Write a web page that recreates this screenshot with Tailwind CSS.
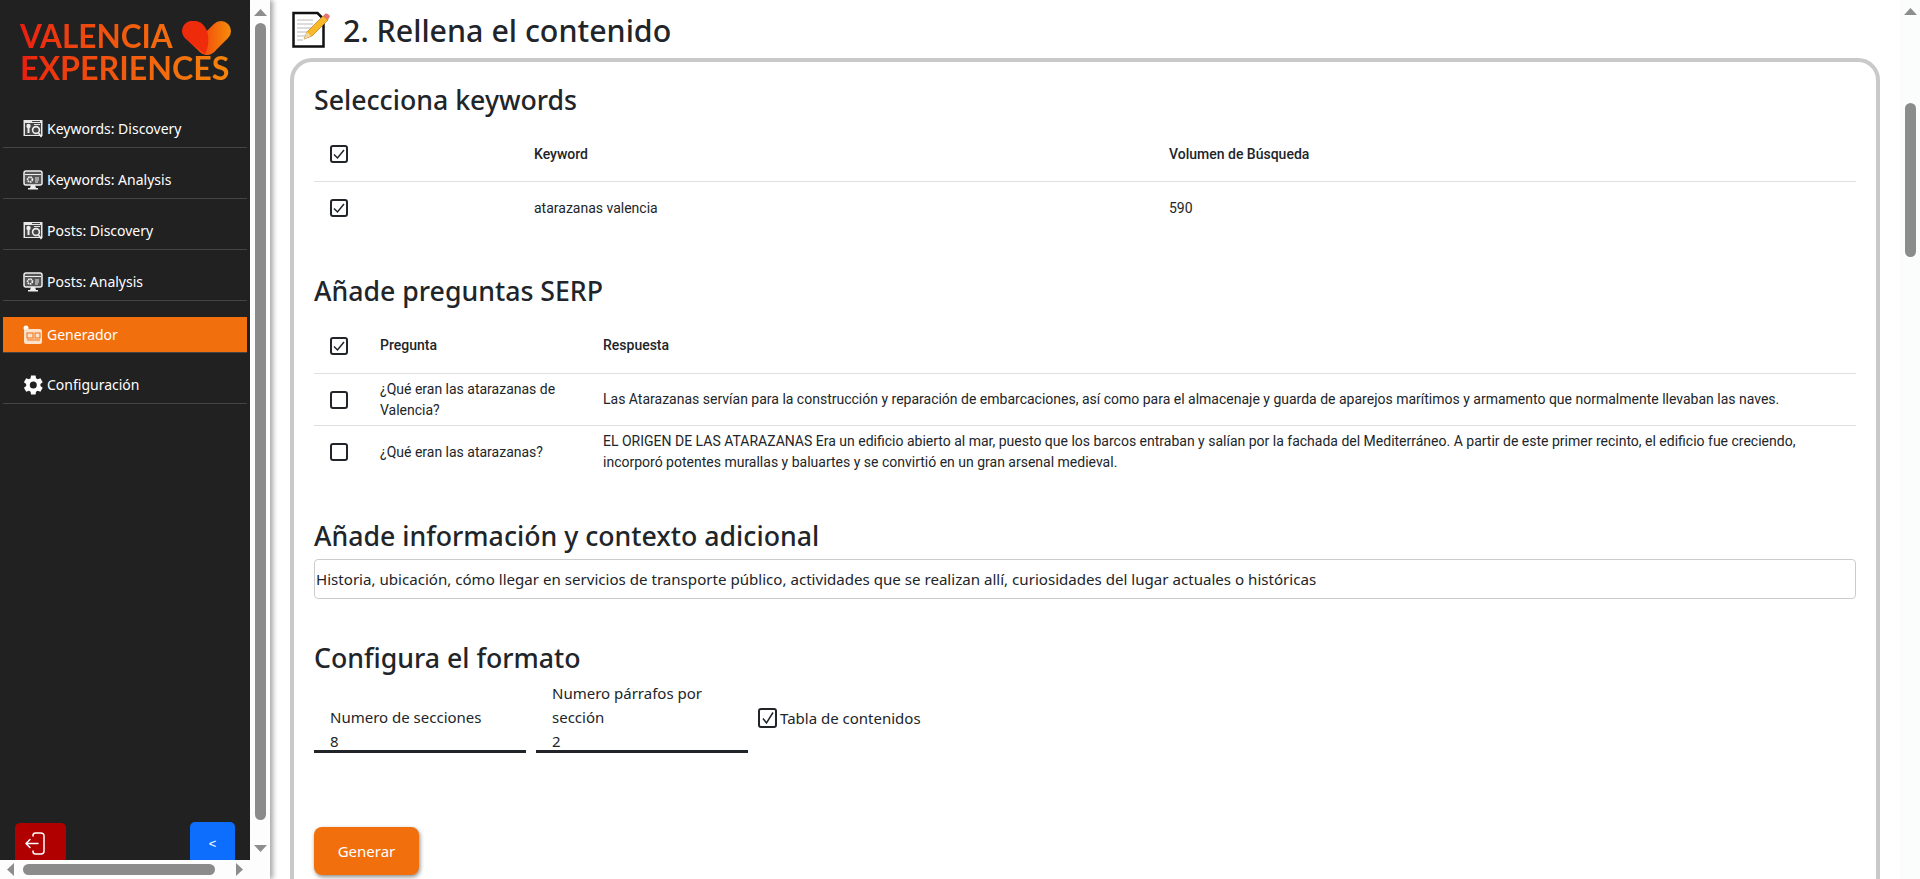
<!DOCTYPE html>
<html>
<head>
    <title>Generador</title>
    <script src="https://cdn.jsdelivr.net/npm/@tailwindcss/browser@4"></script>
</head>
<body class="bg-white text-[#212529] font-['Noto_Sans',sans-serif] overflow-hidden">
    <div class="flex h-[879px] w-[1920px] overflow-hidden">

        <!-- Sidebar -->
        <div class="w-[270px] h-full shrink-0 flex flex-col shadow-[3px_0_5px_rgba(0,0,0,0.35)] z-10 bg-white">
            <div class="flex flex-1 min-h-0">
                <div class="w-[250px] bg-[#212121] flex flex-col overflow-hidden">
                    <!-- Logo -->
                    <div class="pl-[20px] pt-[20px] h-[110px] relative font-['Lato',sans-serif] font-bold leading-[32px] text-transparent">
                        <div class="text-[31.500px] w-[212px] bg-clip-text bg-linear-to-r from-[#ea1c10] to-[#f5850a]">VALENCIA</div>
                        <div class="text-[32.200px] w-[212px] bg-clip-text bg-linear-to-r from-[#ea1c10] to-[#f5850a]">EXPERIENCES</div>
                        <svg class="absolute left-[181px] top-[19px]" width="50" height="37" viewBox="0 0 50 37" fill="none">
                            <defs>
                                <linearGradient id="heart" gradientUnits="userSpaceOnUse" x1="0" y1="0" x2="50" y2="0"><stop offset="0" stop-color="#ee1c0e"/><stop offset="1" stop-color="#f68c0a"/></linearGradient>
                            </defs>
                            <path d="M26 26L40 12" stroke="url(#heart)" stroke-width="20" stroke-linecap="round"/>
                            <path d="M11 12L26 26" stroke="url(#heart)" stroke-width="20" stroke-linecap="round"/>
                            <path d="M13 2C22 2 26 10 27 16c1 7 0 13-3 19l-2-1.500L4 19C-1 13 1 2 13 2z" fill="#ee2c0c"/>
                        </svg>
                    </div>

                    <!-- Nav -->
                    <nav class="text-[14px] text-white">
                        <a class="mx-[3px] h-[38px] mb-[13px] flex items-center gap-[4px] pl-[20px] border-b border-[#444]">
                            <svg width="20" height="20" viewBox="0 0 20 20" fill="none"><rect x="0.500" y="1" width="19" height="16" fill="#e8e8e8"/><rect x="2" y="4" width="16" height="12" fill="#444"/><rect x="9" y="2" width="8" height="1" fill="#444"/><circle cx="5.500" cy="7" r="2.200" fill="#eee"/><rect x="4.500" y="8" width="2" height="6" fill="#eee"/><circle cx="13" cy="11" r="3.400" stroke="#eee" stroke-width="1.600"/><path d="M15.500 14l3 4" stroke="#eee" stroke-width="1.600"/><rect x="11" y="5" width="6" height="1" fill="#ddd"/></svg>
                            <span>Keywords: Discovery</span>
                        </a>
                        <a class="mx-[3px] h-[38px] mb-[13px] flex items-center gap-[4px] pl-[20px] border-b border-[#444]">
                            <svg width="20" height="20" viewBox="0 0 20 20" fill="none"><rect x="1" y="1" width="18" height="14" rx="2" fill="#555" stroke="#eee" stroke-width="1.500"/><rect x="2" y="4" width="16" height="1" fill="#eee"/><circle cx="7" cy="9.500" r="2.400" stroke="#eee" stroke-width="1.800" stroke-dasharray="1.500 0.600"/><path d="M12 8h4M12 10h4M12 12h3" stroke="#eee"/><path d="M8 15h4l1 3H7z" fill="#eee"/><rect x="5" y="18" width="10" height="1.500" fill="#eee"/></svg>
                            <span>Keywords: Analysis</span>
                        </a>
                        <a class="mx-[3px] h-[38px] mb-[13px] flex items-center gap-[4px] pl-[20px] border-b border-[#444]">
                            <svg width="20" height="20" viewBox="0 0 20 20" fill="none"><rect x="0.500" y="1" width="19" height="16" fill="#e8e8e8"/><rect x="2" y="4" width="16" height="12" fill="#444"/><rect x="9" y="2" width="8" height="1" fill="#444"/><circle cx="5.500" cy="7" r="2.200" fill="#eee"/><rect x="4.500" y="8" width="2" height="6" fill="#eee"/><circle cx="13" cy="11" r="3.400" stroke="#eee" stroke-width="1.600"/><path d="M15.500 14l3 4" stroke="#eee" stroke-width="1.600"/><rect x="11" y="5" width="6" height="1" fill="#ddd"/></svg>
                            <span>Posts: Discovery</span>
                        </a>
                        <a class="mx-[3px] h-[38px] mb-[16px] flex items-center gap-[4px] pl-[20px] border-b border-[#444]">
                            <svg width="20" height="20" viewBox="0 0 20 20" fill="none"><rect x="1" y="1" width="18" height="14" rx="2" fill="#555" stroke="#eee" stroke-width="1.500"/><rect x="2" y="4" width="16" height="1" fill="#eee"/><circle cx="7" cy="9.500" r="2.400" stroke="#eee" stroke-width="1.800" stroke-dasharray="1.500 0.600"/><path d="M12 8h4M12 10h4M12 12h3" stroke="#eee"/><path d="M8 15h4l1 3H7z" fill="#eee"/><rect x="5" y="18" width="10" height="1.500" fill="#eee"/></svg>
                            <span>Posts: Analysis</span>
                        </a>
                        <a class="mx-[3px] h-[36px] mb-[13px] flex items-center gap-[4px] pl-[20px] bg-[#f16f0c] border-b border-[#444]">
                            <svg width="20" height="20" viewBox="0 0 20 20" fill="none"><circle cx="3" cy="3" r="2.500" fill="#fff"/><path d="M1 6c0-1 1-2 2-2h14c1 0 2 1 2 2v11c0 1-1 2-2 2H3c-1 0-2-1-2-2z" fill="#fde2cc"/><rect x="4" y="8" width="6" height="5" stroke="#f16f0c"/><rect x="12" y="8" width="5" height="5" stroke="#f16f0c"/><path d="M4 15h13" stroke="#f16f0c"/></svg>
                            <span>Generador</span>
                        </a>
                        <a class="mx-[3px] h-[38px] flex items-center gap-[4px] pl-[20px] border-b border-[#444]">
                            <svg width="20" height="20" viewBox="2 2 20 20" fill="#fff"><path d="M19.400 13a7.600 7.600 0 0 0 0-2l2.300-1.800-2.300-4-2.700 1.100a7.500 7.500 0 0 0-1.700-1L14.600 2.500h-4.600L9.600 5.300a7.500 7.500 0 0 0-1.700 1L5.200 5.200l-2.300 4L5.200 11a7.600 7.600 0 0 0 0 2l-2.300 1.800 2.300 4 2.700-1.100c.5.400 1.100.7 1.700 1l.4 2.800h4.600l.4-2.800c.6-.3 1.200-.6 1.700-1l2.700 1.100 2.300-4zM12.300 15.500a3.500 3.500 0 1 1 0-7 3.500 3.500 0 0 1 0 7z"/></svg>
                            <span>Configuración</span>
                        </a>
                    </nav>

                    <!-- Bottom buttons -->
                    <div class="mt-auto flex justify-between items-end pl-[15px] pr-[15px]">
                        <button class="w-[51px] h-[37px] bg-[#b00000] rounded-t-[5px] flex items-center justify-center pr-[8px] pt-[4px]">
                            <svg width="26" height="26" viewBox="0 0 26 26" fill="none" stroke="#fff" stroke-width="1.500" stroke-linecap="round" stroke-linejoin="round"><path d="M9 5V4.500C9 3 10 2 11.500 2h5C19 2 20 3 20 5v15c0 2-1 3-3 3h-5.500C10 23 9 22 9 20.500V20"/><path d="M14 12.500H2M6 8.500l-4 4 4 4"/></svg>
                        </button>
                        <button class="w-[45px] h-[38px] bg-[#0d6efd] rounded-t-[5px] text-white text-[13px] pt-[6px] font-['Liberation_Sans',sans-serif]">&lt;</button>
                    </div>
                </div>

                <!-- Sidebar vertical scrollbar -->
                <div class="w-[20px] bg-[#fdfdfd] flex flex-col items-center">
                    <svg class="mt-[9px]" width="13" height="7" viewBox="0 0 13 7"><path d="M6.500 0L13 7H0z" fill="#8d8d8d"/></svg>
                    <div class="mt-[7px] w-[11px] h-[797px] rounded-full bg-[#8b8b8b]"></div>
                    <svg class="mt-[25px]" width="13" height="7" viewBox="0 0 13 7"><path d="M6.500 7L13 0H0z" fill="#8d8d8d"/></svg>
                </div>
            </div>

            <!-- Sidebar horizontal scrollbar -->
            <div class="h-[19px] bg-[#fdfdfd] flex items-center pl-[7px] shrink-0">
                <svg width="7" height="13" viewBox="0 0 7 13"><path d="M0 6.500L7 0V13z" fill="#8d8d8d"/></svg>
                <div class="ml-[9px] w-[192px] h-[11px] rounded-full bg-[#8b8b8b]"></div>
                <svg class="ml-[21px]" width="7" height="13" viewBox="0 0 7 13"><path d="M7 6.500L0 0V13z" fill="#8d8d8d"/></svg>
            </div>
        </div>

        <!-- Main -->
        <main class="flex-1 min-w-0 h-full overflow-hidden pl-[20px] pr-[20px]">
            <div class="h-[58px] flex items-start pt-[11px] pl-[2px]">
                <svg width="38" height="38" viewBox="0 0 38 38" fill="none">
                    <path d="M1.500 2h24l6 6v27.500h-30z" fill="#fff" stroke="#111" stroke-width="2.500"/>
                    <path d="M5 9h16M5 13h16M5 17h15M5 21h11M5 25h8M5 29h6" stroke="#b9b9b9" stroke-width="1.200"/>
                    <path d="M12 28l3-7L31 5l5 4-16 16z" fill="#f9b92b" stroke="#b57c12" stroke-width="0.700"/>
                    <path d="M31 5l2-2c1-1 3 0 4 1s1 2 0 3l-1 2z" fill="#e2756f"/>
                    <path d="M12 28l3-7 4 4z" fill="#f2d8a8"/>
                </svg>
                <h1 class="ml-[13px] mt-[1px] text-[30.400px] font-medium leading-[38px] whitespace-nowrap">2. Rellena el contenido</h1>
            </div>

            <div class="w-[1590px] border-4 border-[#c9c9c9] rounded-[22px] pl-[20px] pr-[20px] pb-[40px] pt-[20px] h-[900px]">
                <h2 class="text-[26.700px] font-medium leading-[36px]">Selecciona keywords</h2>

                <!-- Keywords table -->
                <div class="mt-[11px] font-['Roboto',sans-serif] text-[14px]">
                    <div class="h-[53px] flex items-center border-b border-[#e0e0e0] font-medium pb-[2px]">
                        <div class="w-[220px] pl-[16px]">
                            <div class="w-[18px] h-[18px] border-2 border-[#212529] rounded-[3px] flex items-center justify-center">
                                <svg width="14" height="14" viewBox="0 0 14 14" fill="none"><path d="M2 7.500L5.500 11 12 3" stroke="#212529" stroke-width="1.500"/></svg>
                            </div>
                        </div>
                        <div class="w-[635px]">Keyword</div>
                        <div>Volumen de Búsqueda</div>
                    </div>
                    <div class="h-[52px] flex items-center">
                        <div class="w-[220px] pl-[16px]">
                            <div class="w-[18px] h-[18px] border-2 border-[#212529] rounded-[3px] flex items-center justify-center">
                                <svg width="14" height="14" viewBox="0 0 14 14" fill="none"><path d="M2 7.500L5.500 11 12 3" stroke="#212529" stroke-width="1.500"/></svg>
                            </div>
                        </div>
                        <div class="w-[635px]">atarazanas valencia</div>
                        <div>590</div>
                    </div>
                </div>

                <h2 class="mt-[39px] text-[26.700px] font-medium leading-[36px]">Añade preguntas SERP</h2>

                <!-- SERP table -->
                <div class="mt-[9px] font-['Roboto',sans-serif] text-[14px]">
                    <div class="h-[56px] flex items-center border-b border-[#e0e0e0] font-medium">
                        <div class="w-[66px] pl-[16px] shrink-0">
                            <div class="w-[18px] h-[18px] border-2 border-[#212529] rounded-[3px] flex items-center justify-center">
                                <svg width="14" height="14" viewBox="0 0 14 14" fill="none"><path d="M2 7.500L5.500 11 12 3" stroke="#212529" stroke-width="1.500"/></svg>
                            </div>
                        </div>
                        <div class="w-[223px] shrink-0">Pregunta</div>
                        <div>Respuesta</div>
                    </div>
                    <div class="h-[52px] flex items-center border-b border-[#e0e0e0] leading-[21px]">
                        <div class="w-[66px] pl-[16px] shrink-0">
                            <div class="w-[18px] h-[18px] border-2 border-[#212529] rounded-[3px]"></div>
                        </div>
                        <div class="w-[223px] shrink-0 pr-[40px]">¿Qué eran las atarazanas de Valencia?</div>
                        <div>Las Atarazanas servían para la construcción y reparación de embarcaciones, así como para el almacenaje y guarda de aparejos marítimos y armamento que normalmente llevaban las naves.</div>
                    </div>
                    <div class="h-[52px] flex items-center leading-[21px]">
                        <div class="w-[66px] pl-[16px] shrink-0">
                            <div class="w-[18px] h-[18px] border-2 border-[#212529] rounded-[3px]"></div>
                        </div>
                        <div class="w-[223px] shrink-0 pr-[40px]">¿Qué eran las atarazanas?</div>
                        <div class="pr-[20px]">EL ORIGEN DE LAS ATARAZANAS Era un edificio abierto al mar, puesto que los barcos entraban y salían por la fachada del Mediterráneo. A partir de este primer recinto, el edificio fue creciendo, incorporó potentes murallas y baluartes y se convirtió en un gran arsenal medieval.</div>
                    </div>
                </div>

                <h2 class="mt-[40px] text-[26.700px] font-medium leading-[36px]">Añade información y contexto adicional</h2>
                <div class="mt-[5px] h-[40px] border border-[#ccc] rounded-[4px] flex items-center pl-[1px] pt-[1px] text-[15.100px]">Historia, ubicación, cómo llegar en servicios de transporte público, actividades que se realizan allí, curiosidades del lugar actuales o históricas</div>

                <h2 class="mt-[41px] text-[26.700px] font-medium leading-[36px]">Configura el formato</h2>

                <!-- Format -->
                <div class="mt-[2px] flex gap-[10px] items-center text-[15px] leading-[24px]">
                    <div class="w-[212px] h-[75px] flex flex-col justify-end border-b-[3px] border-[#212529] pl-[16px]">
                        <div>Numero de secciones</div>
                        <div class="-mb-[3px]">8</div>
                    </div>
                    <div class="w-[212px] h-[75px] flex flex-col justify-end border-b-[3px] border-[#212529] pl-[16px] pr-[30px]">
                        <div>Numero párrafos por sección</div>
                        <div class="-mb-[3px]">2</div>
                    </div>
                    <label class="flex items-center gap-[3px] pt-[5px]">
                        <span class="w-[19px] h-[20px] border-2 border-[#212529] rounded-[3px] flex items-center justify-center">
                            <svg width="14" height="16" viewBox="0 0 14 16" fill="none"><path d="M2 8.500L5.500 13 12 2.500" stroke="#212529" stroke-width="1.500"/></svg>
                        </span>
                        Tabla de contenidos
                    </label>
                </div>

                <button class="mt-[74px] w-[105px] h-[48px] bg-[#f16f0c] text-white text-[15px] rounded-[8px] shadow-[1px_2px_4px_rgba(0,0,0,0.45)]">Generar</button>
            </div>
        </main>

        <!-- Page scrollbar -->
        <div class="w-[20px] h-full shrink-0 bg-[#fbfcfc] flex flex-col items-center">
            <svg class="mt-[8px]" width="13" height="7" viewBox="0 0 13 7"><path d="M6.500 0L13 7H0z" fill="#8d8d8d"/></svg>
            <div class="mt-[88px] w-[11px] h-[154px] rounded-full bg-[#8b8b8b]"></div>
        </div>
    </div>
</body>
</html>
